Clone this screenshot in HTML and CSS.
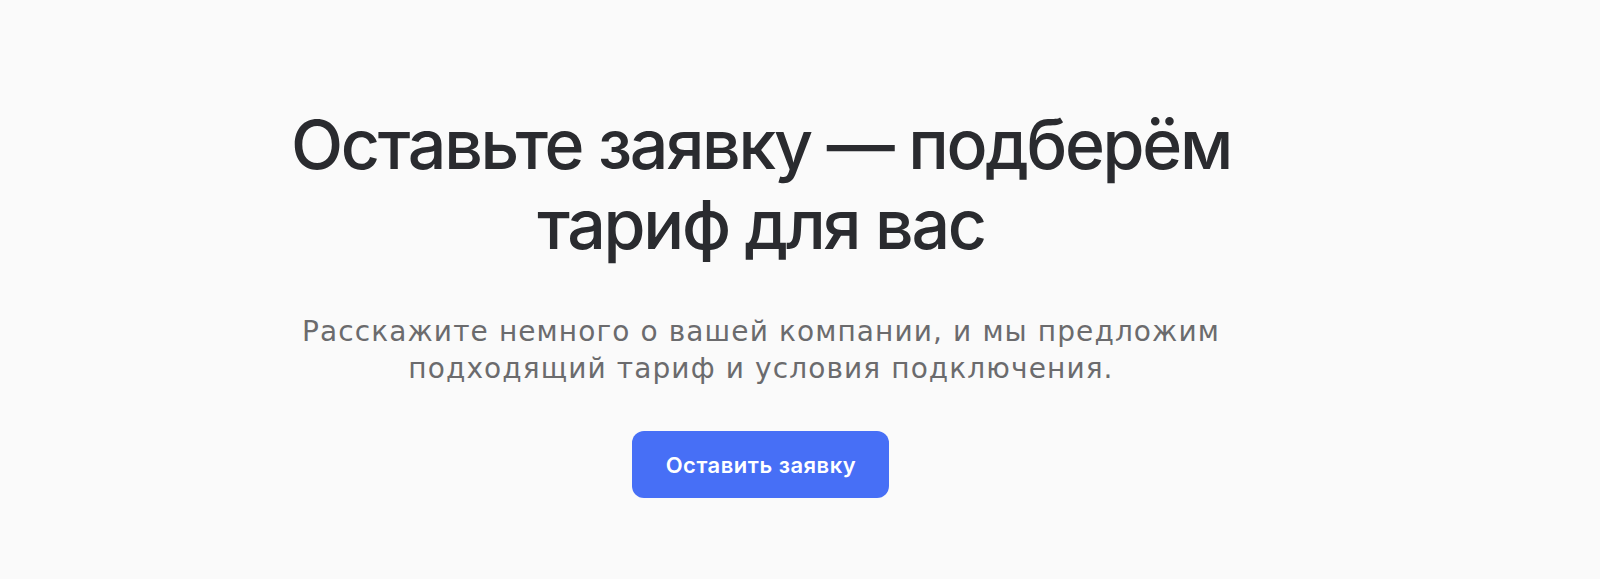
FILE: index.html
```html
<!DOCTYPE html>
<html lang="ru">
<head>
<meta charset="utf-8">
<title>Оставьте заявку</title>
<link rel="stylesheet" href="styles.css">
</head>
<body>
<section class="cta">
  <div class="cta__inner">
    <h1 class="cta__title">Оставьте заявку — подберём<br>тариф для вас</h1>
    <p class="cta__text">Расскажите немного о вашей компании, и мы предложим<br>подходящий тариф и условия подключения.</p>
    <a class="cta__button" href="#">Оставить заявку</a>
  </div>
</section>
</body>
</html>
```
FILE: styles.css
```css
* { box-sizing: border-box; }

html, body {
  margin: 0;
  padding: 0;
  background: #fafafa;
}

body {
  font-family: Inter, "Noto Sans", "Liberation Sans", sans-serif;
  color: #2a2b2f;
}

.cta {
  display: flex;
  justify-content: center;
  padding: 104px 78px 0 0;
  min-height: 579px;
}

.cta__inner {
  display: flex;
  flex-direction: column;
  align-items: center;
  text-align: center;
}

.cta__title {
  margin: 0;
  font-size: 68px;
  font-weight: 500;
  line-height: 80px;
  letter-spacing: -2.3px;
  color: #2a2b2f;
}

.cta__text {
  margin: 49px 0 0;
  font-family: "DejaVu Sans", Inter, sans-serif;
  font-size: 28px;
  line-height: 37px;
  font-weight: 400;
  letter-spacing: 1.1px;
  color: #6b6b6d;
}

.cta__button {
  margin-top: 44px;
  display: inline-flex;
  align-items: center;
  justify-content: center;
  width: 257px;
  height: 67px;
  border-radius: 12px;
  background: #476ff6;
  color: #fff;
  font-size: 22px;
  font-weight: 600;
  letter-spacing: 0.5px;
  text-decoration: none;
}
```
